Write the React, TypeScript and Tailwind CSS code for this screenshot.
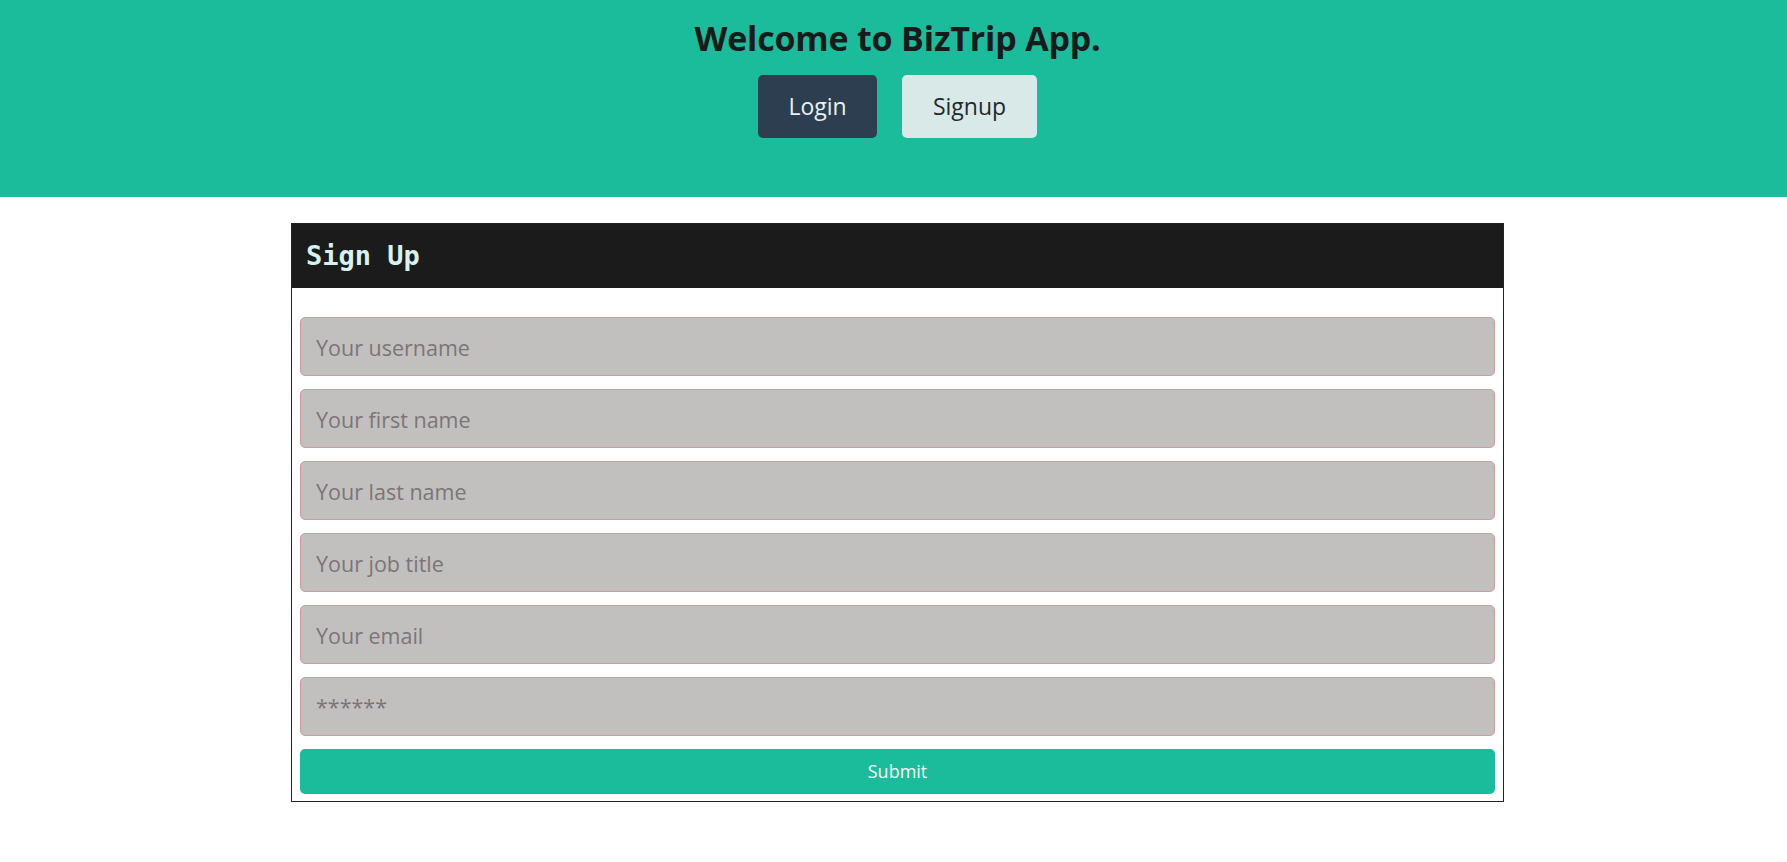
import React from "react";

const fields = [
  "Your username",
  "Your first name",
  "Your last name",
  "Your job title",
  "Your email",
];

export default function App() {
  return (
    <div className="min-h-screen bg-white" style={{ fontFamily: '"Open Sans", "Noto Sans", sans-serif' }}>
      <header className="h-[197px] bg-[#1bbc9b] flex flex-col items-center pt-[14px] pl-[8px]">
        <h1 className="text-[34px] leading-[48px] font-bold text-[#1a1a1a] tracking-[-0.2px]">
          Welcome to BizTrip App.
        </h1>
        <div className="mt-[13px] flex gap-[25px]">
          <button className="w-[119px] h-[63px] rounded-[5px] bg-[#2c3e50] text-[#e6f3f3] text-[23px]">
            Login
          </button>
          <button className="w-[135px] h-[63px] rounded-[5px] bg-[#d9e9e8] text-[#1f2a2e] text-[23px]">
            Signup
          </button>
        </div>
      </header>
      <div className="ml-[291px] mt-[26px] w-[1213px] border border-[#222] bg-white">
        <div className="h-[64px] bg-[#1b1b1b] flex items-center px-[14px]">
          <h2
            className="text-[27px] font-bold text-[#d6f1ee]"
            style={{ fontFamily: '"DejaVu Sans Mono", "Liberation Mono", monospace' }}
          >
            Sign Up
          </h2>
        </div>
        <form className="px-[8px] pt-[29px] pb-[7px] flex flex-col gap-[13px]">
          {fields.map((f) => (
            <input
              key={f}
              type="text"
              placeholder={f}
              className="h-[59px] w-full rounded-[5px] border border-[#d19a9a] bg-[#c2bfbf] px-[15px] pt-[2px] text-[21.5px] text-[#333] placeholder:text-[#7a7676] outline-none"
            />
          ))}
          <input
            type="password"
            placeholder="******"
            className="h-[59px] w-full rounded-[5px] border border-[#d19a9a] bg-[#c2bfbf] px-[15px] text-[21.5px] text-[#333] placeholder:text-[#7a7676] outline-none"
          />
          <button
            type="button"
            className="h-[45px] w-full rounded-[5px] bg-[#1bbc9b] text-[18px] text-[#f4fbf9]"
          >
            Submit
          </button>
        </form>
      </div>
    </div>
  );
}
